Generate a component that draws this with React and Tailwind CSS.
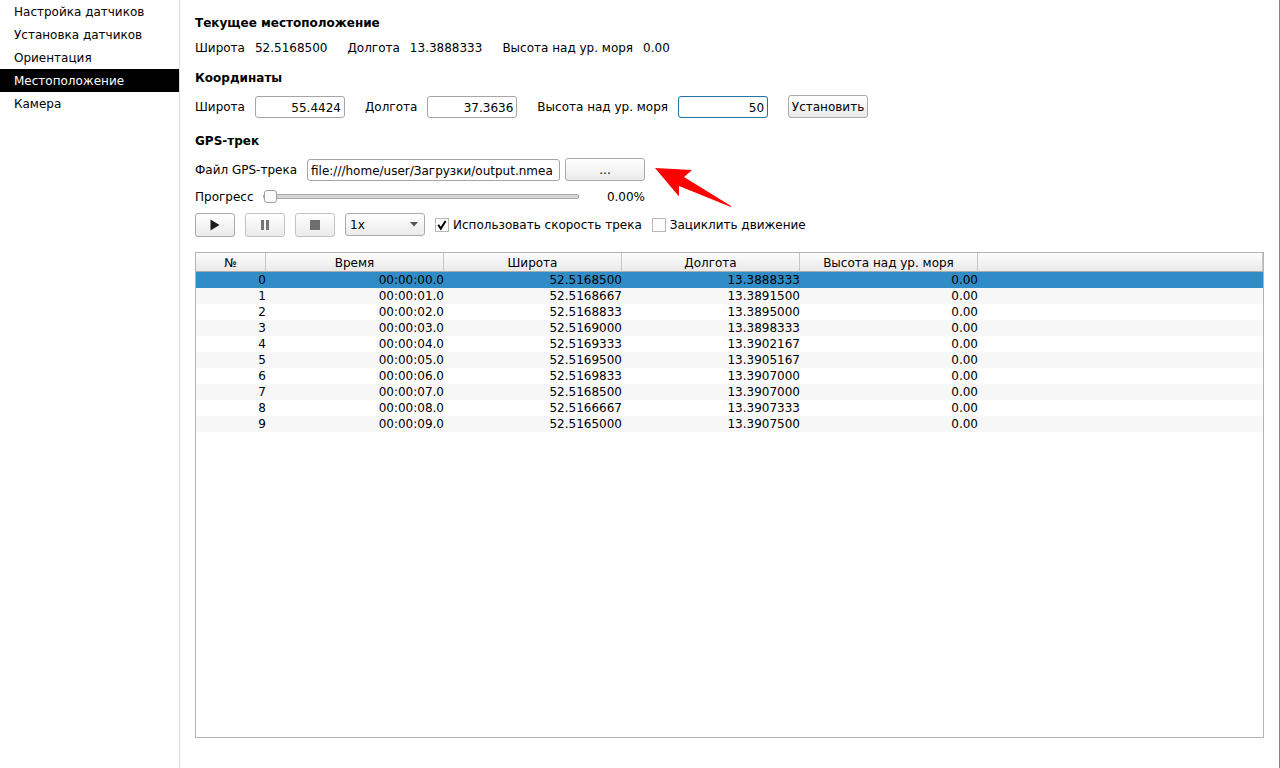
import { useState } from "react";

const SECTIONS = [
  "Настройка датчиков",
  "Установка датчиков",
  "Ориентация",
  "Местоположение",
  "Камера",
];

const COLUMNS = ["№", "Время", "Широта", "Долгота", "Высота над ур. моря"];

const TRACK = [
  ["00:00:00.0", "52.5168500", "13.3888333", "0.00"],
  ["00:00:01.0", "52.5168667", "13.3891500", "0.00"],
  ["00:00:02.0", "52.5168833", "13.3895000", "0.00"],
  ["00:00:03.0", "52.5169000", "13.3898333", "0.00"],
  ["00:00:04.0", "52.5169333", "13.3902167", "0.00"],
  ["00:00:05.0", "52.5169500", "13.3905167", "0.00"],
  ["00:00:06.0", "52.5169833", "13.3907000", "0.00"],
  ["00:00:07.0", "52.5168500", "13.3907000", "0.00"],
  ["00:00:08.0", "52.5166667", "13.3907333", "0.00"],
  ["00:00:09.0", "52.5165000", "13.3907500", "0.00"],
];

const BUTTON =
  "flex items-center justify-center rounded-[3px] border border-[#aaaaaa] bg-linear-to-b from-white to-[#ebebeb] disabled:border-[#c3c3c3]";
const INPUT = "h-[22px] rounded-[3px] border bg-white px-[3px] pt-[2px] outline-none";

function Title({ children }) {
  return <h2 className="font-bold">{children}</h2>;
}

function Value({ label, value }) {
  return (
    <div className="flex gap-[10px]">
      <dt>{label}</dt>
      <dd>{value}</dd>
    </div>
  );
}

function Field({ id, label, value, onChange, active }) {
  return (
    <div className="flex items-center gap-[10px]">
      <label htmlFor={id}>{label}</label>
      <input
        id={id}
        type="text"
        value={value}
        onChange={(e) => onChange(e.target.value)}
        className={`${INPUT} w-[90px] text-right ${
          active ? "border-[#2574a8] inset-shadow-[0_0_1px_#8fc0e4]" : "border-[#a6a6a6]"
        }`}
      />
    </div>
  );
}

function Check({ label, checked, onChange }) {
  return (
    <label className="flex items-center gap-1">
      <span className="grid size-[14px]">
        <input
          type="checkbox"
          checked={checked}
          onChange={(e) => onChange(e.target.checked)}
          className="col-start-1 row-start-1 size-[14px] appearance-none border border-[#b7b7b7] bg-white"
        />
        {checked && (
          <svg viewBox="0 0 14 14" className="pointer-events-none col-start-1 row-start-1 size-[14px]">
            <path d="M3.2 6.8 L5.8 10.6 L10.6 3" fill="none" stroke="#000" strokeWidth="2" />
          </svg>
        )}
      </span>
      {label}
    </label>
  );
}

function TrackTable({ current, onSelect }) {
  return (
    <div className="flex-1 border border-[#b4b4b4] bg-white">
      <table className="w-full table-fixed border-separate border-spacing-0">
        <colgroup>
          <col className="w-[70px]" />
          <col className="w-[178px]" />
          <col className="w-[178px]" />
          <col className="w-[178px]" />
          <col className="w-[178px]" />
          <col />
        </colgroup>
        <thead>
          <tr className="h-[19px] bg-linear-to-b from-[#fdfdfd] to-[#e8e8e8]">
            {COLUMNS.map((c) => (
              <th key={c} className="border-r border-b border-r-[#c6c6c6] border-b-[#ababab] p-0 pt-px font-normal">
                {c}
              </th>
            ))}
            <td className="border-r border-b border-r-[#c6c6c6] border-b-[#ababab] p-0" />
          </tr>
        </thead>
        <tbody>
          {TRACK.map((row, i) => (
            <tr
              key={i}
              onClick={() => onSelect(i)}
              className={`h-4 ${i === current ? "bg-[#308cc6]" : i % 2 ? "bg-[#f7f7f7]" : "bg-white"}`}
            >
              <td className="p-0 text-right">{i}</td>
              {row.map((cell, j) => (
                <td key={j} className="p-0 text-right">{cell}</td>
              ))}
              <td className="p-0" />
            </tr>
          ))}
        </tbody>
      </table>
    </div>
  );
}

export default function App() {
  const [section, setSection] = useState("Местоположение");
  const [lat, setLat] = useState("55.4424");
  const [lon, setLon] = useState("37.3636");
  const [alt, setAlt] = useState("50");
  const [file, setFile] = useState("file:///home/user/Загрузки/output.nmea");
  const [progress, setProgress] = useState(0);
  const [useSpeed, setUseSpeed] = useState(true);
  const [loop, setLoop] = useState(false);
  const [current, setCurrent] = useState(0);

  return (
    <div className="flex min-h-screen border-r border-[#5b8fc9] bg-white font-['DejaVu_Sans',sans-serif] text-[12px] leading-4 text-black">
      {/* Sections */}
      <nav className="flex w-[180px] shrink-0 flex-col border-r border-[#dcdcdc]">
        {SECTIONS.map((s) => (
          <button
            key={s}
            onClick={() => setSection(s)}
            className={`h-[23px] px-[14px] pt-px text-left ${s === section ? "bg-black text-white" : ""}`}
          >
            {s}
          </button>
        ))}
      </nav>

      <main className="flex min-w-0 flex-1 flex-col px-[15px] pt-[15px] pb-[30px]">
        <Title>Текущее местоположение</Title>
        <dl className="mt-[9px] flex gap-5">
          <Value label="Широта" value="52.5168500" />
          <Value label="Долгота" value="13.3888333" />
          <Value label="Высота над ур. моря" value="0.00" />
        </dl>

        <div className="mt-[14px]">
          <Title>Координаты</Title>
        </div>
        <form className="mt-[9px] flex items-center gap-5" onSubmit={(e) => e.preventDefault()}>
          <Field id="lat" label="Широта" value={lat} onChange={setLat} />
          <Field id="lon" label="Долгота" value={lon} onChange={setLon} />
          <Field id="alt" label="Высота над ур. моря" value={alt} onChange={setAlt} active />
          <button type="submit" className={`${BUTTON} h-[23px] w-20`}>Установить</button>
        </form>

        <div className="mt-[15px]">
          <Title>GPS-трек</Title>
        </div>
        <div className="relative mt-[9px] w-[450px]">
          <div className="flex items-center">
            <label htmlFor="file" className="mr-[10px]">Файл GPS-трека</label>
            <input
              id="file"
              type="text"
              value={file}
              onChange={(e) => setFile(e.target.value)}
              className={`${INPUT} min-w-0 flex-1 border-[#a6a6a6]`}
            />
            <button className={`${BUTTON} ml-[5px] h-[23px] w-20`}>...</button>
          </div>

          <div className="mt-2 flex items-center">
            <label htmlFor="progress" className="mr-[10px]">Прогресс</label>
            <input
              id="progress"
              type="range"
              min="0"
              max="100"
              value={progress}
              onChange={(e) => setProgress(Number(e.target.value))}
              className="h-[15px] min-w-0 flex-1 appearance-none self-start bg-transparent [&::-webkit-slider-runnable-track]:h-[5px] [&::-webkit-slider-runnable-track]:rounded-[2px] [&::-webkit-slider-runnable-track]:border [&::-webkit-slider-runnable-track]:border-[#a8a8a8] [&::-webkit-slider-runnable-track]:bg-[#d6d6d6] [&::-webkit-slider-thumb]:-mt-[5px] [&::-webkit-slider-thumb]:size-[13px] [&::-webkit-slider-thumb]:appearance-none [&::-webkit-slider-thumb]:rounded-[3px] [&::-webkit-slider-thumb]:border [&::-webkit-slider-thumb]:border-[#a0a0a0] [&::-webkit-slider-thumb]:bg-[#fafafa]"
            />
            <output htmlFor="progress" className="w-[66px] text-right">{progress.toFixed(2)}%</output>
          </div>

          {/* Pointer over the file button */}
          <svg viewBox="0 0 77 40" className="pointer-events-none absolute top-[10px] left-[460px] h-10 w-[77px]">
            <path d="M0 0 L37 2 L29 9 L76 38 L76 39 L24 18 L24 28.500 Z" fill="#f00" />
          </svg>
        </div>

        <div className="mt-2 flex h-6 items-center gap-[10px]">
          <button aria-label="Воспроизвести" className={`${BUTTON} h-6 w-10`}>
            <svg viewBox="0 0 10 12" className="h-3 w-[10px]">
              <path d="M0.500 0.500 L9.500 6 L0.500 11.500 Z" fill="#1c1c1c" />
            </svg>
          </button>
          <button aria-label="Пауза" disabled className={`${BUTTON} h-6 w-10`}>
            <svg viewBox="0 0 8 10" className="h-[10px] w-2">
              <path d="M0 0 H3 V10 H0 Z M5 0 H8 V10 H5 Z" fill="#757575" />
            </svg>
          </button>
          <button aria-label="Стоп" disabled className={`${BUTTON} h-6 w-10`}>
            <svg viewBox="0 0 10 10" className="size-[10px]">
              <path d="M0 0 H10 V10 H0 Z" fill="#6f6f6f" />
            </svg>
          </button>
          <div className="grid h-[23px] w-20 items-center self-start">
            <select
              aria-label="Скорость"
              className="col-start-1 row-start-1 h-[23px] w-20 appearance-none rounded-[3px] border border-[#aaaaaa] bg-linear-to-b from-white to-[#ebebeb] pl-1"
            >
              <option>1x</option>
              <option>2x</option>
              <option>4x</option>
            </select>
            <svg viewBox="0 0 8 5" className="pointer-events-none col-start-1 row-start-1 mr-[7px] h-[5px] w-2 justify-self-end">
              <path d="M0 0 H8 L4 4.500 Z" fill="#555" />
            </svg>
          </div>
          <Check label="Использовать скорость трека" checked={useSpeed} onChange={setUseSpeed} />
          <Check label="Зациклить движение" checked={loop} onChange={setLoop} />
        </div>

        <div className="mt-[15px] flex flex-1">
          <TrackTable current={current} onSelect={setCurrent} />
        </div>
      </main>
    </div>
  );
}
